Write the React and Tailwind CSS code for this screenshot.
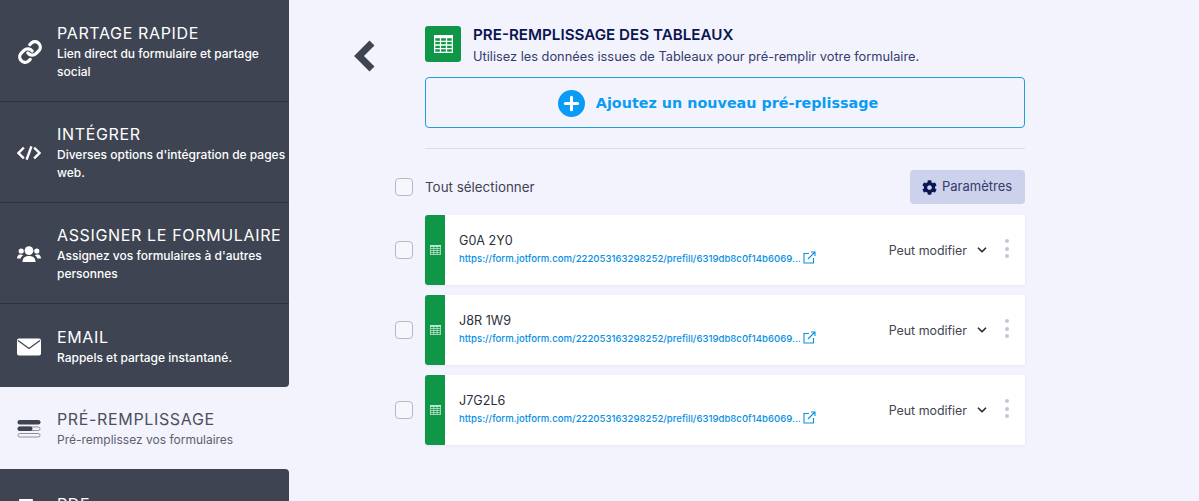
import React from 'react';
import { ChevronDown, Plus } from 'lucide-react';
import { FaCog } from 'react-icons/fa';

const sans = 'font-["Inter","Noto_Sans",sans-serif]';

const LinkIcon = () => (
  <svg width="26" height="26" viewBox="0 0 24 24" fill="none" stroke="white" strokeWidth="3" strokeLinecap="round" strokeLinejoin="round">
    <path d="M10 13a5 5 0 0 0 7.500.5l3-3a5 5 0 0 0-7-7l-1.700 1.700" />
    <path d="M14 11a5 5 0 0 0-7.500-.5l-3 3a5 5 0 0 0 7 7l1.700-1.700" />
  </svg>
);

const CodeIcon = () => (
  <svg width="24" height="14" viewBox="0 0 24 14" fill="none" stroke="white" strokeWidth="2.400" strokeLinecap="square">
    <path d="M6 2.500 1.500 7 6 11.500" />
    <path d="M18 2.500 22.500 7 18 11.500" />
    <path d="M14 1.500 10 12.500" />
  </svg>
);

const UsersIcon = () => (
  <svg width="24" height="16" viewBox="0 0 24 16" fill="white">
    <circle cx="12" cy="4.600" r="4.400" />
    <circle cx="4.200" cy="5" r="2.600" />
    <circle cx="19.800" cy="5" r="2.600" />
    <path d="M5.500 16c0-4 2.300-6 6.500-6s6.500 2 6.500 6z" />
    <path d="M0 12.500c0-2.800 1.500-4 3.800-4 1 0 1.800.3 2.400.8C4.800 10.200 4 11.200 3.700 12.500z" />
    <path d="M24 12.500c0-2.800-1.500-4-3.800-4-1 0-1.800.3-2.400.8 1.400.9 2.200 1.900 2.500 3.200z" />
  </svg>
);

const MailIcon = () => (
  <svg width="24" height="18" viewBox="0 0 24 18">
    <rect width="24" height="17" y="0.500" rx="2" fill="white" />
    <path d="M1 2.500 12 10.500 23 2.500" fill="none" stroke="#3e4452" strokeWidth="1.200" />
  </svg>
);

const PrefillIcon = () => (
  <svg width="24" height="20" viewBox="0 0 24 20">
    <rect x="0.500" y="1" width="23" height="4.500" rx="2.250" fill="#3e4452" />
    <rect x="1" y="8" width="22" height="3.500" rx="1.750" fill="none" stroke="#8b8f9c" />
    <rect x="0.500" y="7.500" width="15" height="4.500" rx="2.250" fill="#3e4452" />
    <rect x="1" y="14.500" width="22" height="3.500" rx="1.750" fill="none" stroke="#8b8f9c" />
  </svg>
);

const TableIcon = ({ width, height, opacity = 1 }) => (
  <svg width={width} height={height} viewBox="0 0 19 18" fill="none" stroke="white" strokeWidth="1.300" opacity={opacity}>
    <rect x="0.650" y="0.650" width="17.700" height="16.700" />
    <path d="M0.650 6.300h17.700M0.650 10h17.700M0.650 13.700h17.700M6.500 2.500v14.800M12.500 2.500v14.800" />
    <rect x="0.650" y="0.650" width="17.700" height="1.900" fill="white" />
  </svg>
);

const ExternalIcon = () => (
  <svg width="13" height="13" viewBox="0 0 13 13" fill="none" stroke="#0a8fe0" strokeWidth="1.100" className="ml-[2px]">
    <path d="M6 2.500H1v9.500h9.500V7" />
    <path d="M5 8 11.500 1.500M8 1h4v4" />
  </svg>
);

const menu = [
  { title: 'PARTAGE RAPIDE', desc: 'Lien direct du formulaire et partage social', Icon: LinkIcon, h: 'h-[102px]', descW: 'w-[215px]' },
  { title: 'INTÉGRER', desc: "Diverses options d'intégration de pages web.", Icon: CodeIcon, h: 'h-[101px]', descW: 'w-[232px]' },
  { title: 'ASSIGNER LE FORMULAIRE', desc: "Assignez vos formulaires à d'autres personnes", Icon: UsersIcon, h: 'h-[101px]', descW: 'w-[232px]' },
  { title: 'EMAIL', desc: 'Rappels et partage instantané.', Icon: MailIcon, h: 'h-[83px]', descW: 'w-[232px]' },
];

const rows = ['G0A 2Y0', 'J8R 1W9', 'J7G2L6'];

const Checkbox = () => <div className="w-[18px] h-[18px] shrink-0 rounded-[4px] border border-[#b5b7cc] bg-[#f6f6fd]" />;

const MenuItem = ({ item, last }) => (
  <div className={`${item.h} pt-[2px] flex items-center pl-[17px] ${last ? '' : 'border-b border-[#2e333f]'}`}>
    <div className="w-[40px] shrink-0 flex"><item.Icon /></div>
    <div>
      <div className="text-[16px] leading-[20px] tracking-[0.65px] text-white">{item.title}</div>
      <div className={`text-[12px] leading-[18px] mt-[2px] font-medium text-white ${item.descW}`}>{item.desc}</div>
    </div>
  </div>
);

const Row = ({ name }) => (
  <div className="flex items-center">
    <div className="w-[30px] shrink-0"><Checkbox /></div>
    <div className="w-[600px] h-[70px] flex bg-white rounded-[3px] shadow-[0_1px_3px_rgba(80,80,140,0.08)]">
      <div className="w-[20px] bg-[#0f9747] rounded-l-[3px] flex items-center justify-center">
        <TableIcon width={11} height={10} opacity={0.8} />
      </div>
      <div className="flex-1 flex flex-col pl-[14px] pt-[18px]">
        <div className="text-[12.600px] leading-[16px] text-[#2b2f3b]">{name}</div>
        <div className="flex mt-[2px] items-start">
          <span className="text-[9.600px] leading-[16px] font-medium text-[#0a8fe0]">https://form.jotform.com/222053163298252/prefill/6319db8c0f14b6069...</span>
          <ExternalIcon />
        </div>
      </div>
      <div className="flex items-center pr-[16px] text-[#3e4452]">
        <span className="text-[12.400px] pt-[2px]">Peut modifier</span>
        <ChevronDown size={14} strokeWidth={3} className="ml-[8px] text-[#2b2f3b]" />
        <div className="ml-[16px] mb-[3px] flex flex-col gap-[3.500px]">
          <div className="w-[4px] h-[4px] rounded-full bg-[#c4c6d4]" />
          <div className="w-[4px] h-[4px] rounded-full bg-[#c4c6d4]" />
          <div className="w-[4px] h-[4px] rounded-full bg-[#c4c6d4]" />
        </div>
      </div>
    </div>
  </div>
);

export default function App() {
  return (
    <div className={`w-[1199px] h-[501px] overflow-hidden flex bg-[#f3f3fe] ${sans}`}>
      <aside className="w-[289px] shrink-0">
        <div className="bg-[#3e4452] rounded-br-[4px]">
          {menu.map((item, i) => (
            <MenuItem key={item.title} item={item} last={i === menu.length - 1} />
          ))}
        </div>
        <div className="h-[82px] pt-[2px] flex items-center pl-[17px]">
          <div className="w-[40px] shrink-0 flex"><PrefillIcon /></div>
          <div>
            <div className="text-[16px] leading-[20px] tracking-[0.65px] text-[#4b4f5c]">PRÉ-REMPLISSAGE</div>
            <div className="text-[12px] leading-[18px] mt-[2px] text-[#5c606c]">Pré-remplissez vos formulaires</div>
          </div>
        </div>
        <div className="bg-[#3e4452] rounded-tr-[4px] h-[101px] flex pl-[19px] pt-[30px]">
          <div className="w-[14px] h-[18px] bg-white rounded-[1px] shrink-0" />
          <div className="ml-[24px] -mt-[5px] text-[16px] leading-[20px] tracking-[0.65px] text-white">PDF</div>
        </div>
      </aside>

      <main className="flex-1 flex pt-[26px]">
        <div className="w-[106px] pl-[64px] pt-[14px] shrink-0">
          <svg width="22" height="32" viewBox="0 0 22 32" fill="none" stroke="#3e4452" strokeWidth="7">
            <path d="M19 3 6 16l13 13" />
          </svg>
        </div>
        <div className="w-[630px] shrink-0">
          <div className="pl-[30px]">
            <div className="flex items-start h-[36px]">
              <div className="w-[36px] h-[36px] bg-[#0f9747] rounded-[3px] flex items-center justify-center">
                <TableIcon width={19} height={18} />
              </div>
              <div className="ml-[12px]">
                <div className="text-[15.200px] leading-[18px] font-semibold text-[#0a1551]">PRE-REMPLISSAGE DES TABLEAUX</div>
                <div className="text-[12.800px] leading-[18px] mt-[4px] text-[#343c6a]">Utilisez les données issues de Tableaux pour pré-remplir votre formulaire.</div>
              </div>
            </div>
            <div className="mt-[15px] h-[51px] border border-[#1ba0d8] rounded-[4px] flex items-center justify-center gap-[11px] pr-[14px] pt-[1px]">
              <span className="w-[27px] h-[27px] rounded-full bg-[#0a9cf5] flex items-center justify-center">
                <Plus size={21} strokeWidth={3.500} className="text-white" />
              </span>
              <span className="font-['DejaVu_Sans',sans-serif] font-bold text-[14.350px] pt-[2px] text-[#0a9cf5]">Ajoutez un nouveau pré-replissage</span>
            </div>
            <div className="mt-[20px] h-px bg-[#dcdce6]" />
          </div>
          <div className="mt-[21px] h-[34px] flex items-center">
            <div className="w-[30px]"><Checkbox /></div>
            <span className="text-[13.400px] text-[#3e4452]">Tout sélectionner</span>
            <button className="ml-auto w-[115px] h-[34px] rounded-[4px] bg-[#ccd1ec] flex items-center pl-[12px] gap-[5px] text-[13px] text-[#343c6a]">
              <FaCog size={15} className="text-[#0a1551]" />
              Paramètres
            </button>
          </div>
          <div className="mt-[11px] flex flex-col gap-[10px]">
            {rows.map((r) => <Row key={r} name={r} />)}
          </div>
        </div>
      </main>
    </div>
  );
}
